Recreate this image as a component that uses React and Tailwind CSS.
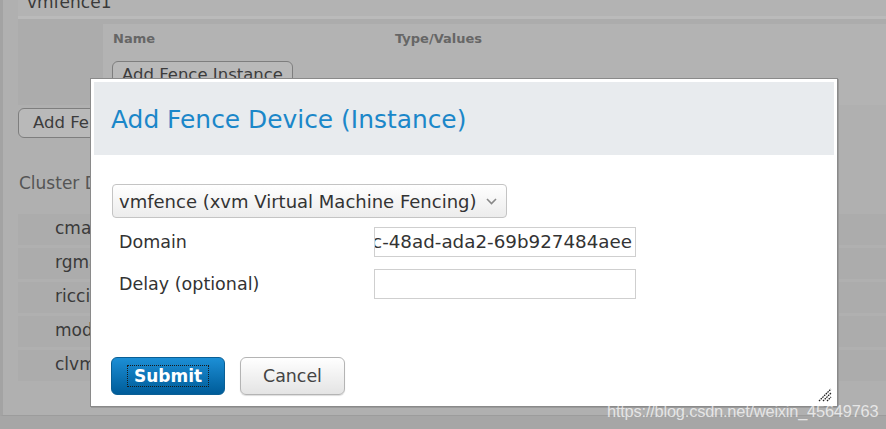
import React from 'react';

const daemons = ['cman', 'rgmanager', 'ricci', 'modclusterd', 'clvmd'];

const ResizeGrip = () => (
  <svg width="16" height="16" viewBox="0 0 16 16" className="absolute right-[4px] bottom-[3px]">
    <path d="M2 14 L14 2 M6 14 L14 6 M10 14 L14 10" stroke="#222" strokeWidth="1.3" strokeDasharray="1.6 0.8" fill="none" />
  </svg>
);

const Dialog = () => (
  <div className="absolute left-[90px] top-[78px] w-[748px] h-[329px] border border-[#8a8a8a] bg-white p-[3px] shadow-[1px_1px_0_#9a9a9a]">
    <div className="h-[73px] bg-[#e8ebee] flex items-center pl-[17px] pt-[3px]">
      <h2 className="text-[24.9px] text-[#1b87c9] leading-none">Add Fence Device (Instance)</h2>
    </div>

    <div className="pl-[18px] pt-[29px]">
      <div className="w-[395px] h-[34px] rounded-[4px] border border-[#c4c4c4] bg-gradient-to-b from-white to-[#ececec] flex items-center justify-between pl-[6px] pr-[9px] text-[18px] text-[#333]">
        <span>vmfence (xvm Virtual Machine Fencing)</span>
        <svg width="11" height="7" viewBox="0 0 11 7">
          <path d="M1 1 L5.5 5.5 L10 1" stroke="#888" strokeWidth="1.6" fill="none" />
        </svg>
      </div>

      <div className="mt-[9px] flex items-center text-[17.5px] text-[#333]">
        <span className="w-[262px] pl-[7px]">Domain</span>
        <div className="w-[262px] h-[30px] border border-[#cfcfcf] flex items-center justify-end overflow-hidden pr-[3px] whitespace-nowrap text-[18.3px]">
          <span>3a1f6d2c-48ad-ada2-69b927484aee</span>
        </div>
      </div>

      <div className="mt-[12px] flex items-center text-[17.5px] text-[#333]">
        <span className="w-[262px] pl-[7px]">Delay (optional)</span>
        <div className="w-[262px] h-[30px] border border-[#cfcfcf]" />
      </div>

      <div className="mt-[58px] -ml-[1px] flex gap-[15px]">
        <button className="w-[114px] h-[38px] rounded-[6px] border border-[#0a5f95] bg-gradient-to-b from-[#1c8fd6] to-[#005c99] flex items-center justify-center">
          <span className="border border-dotted border-[#1a1a1a] px-[6px] text-[17px] font-bold text-white leading-[20px]">Submit</span>
        </button>
        <button className="w-[105px] h-[38px] rounded-[6px] border border-[#b4b4b4] bg-gradient-to-b from-white to-[#e4e4e4] text-[17.4px] text-[#444] shadow-[0_1px_1px_#ddd]">
          Cancel
        </button>
      </div>
    </div>
    <ResizeGrip />
  </div>
);

export default function App() {
  return (
    <div className="relative w-[886px] h-[429px] overflow-hidden bg-[#a6a6a6]" style={{ fontFamily: '"DejaVu Sans", sans-serif' }}>
      {/* page behind the overlay */}
      <div className="h-[416px] bg-[#b0b0b0] border-l-[3px] border-[#a3a3a3] border-b border-b-[#9c9c9c] pl-[15px]">
        <div className="h-[16px] bg-[#b3b3b3] overflow-hidden">
          <div className="-mt-[10px] ml-[9px] text-[17px] text-[#3a3a3a]">vmfence1</div>
        </div>
        <div className="h-[3px] bg-[#bababa]" />
        <div className="h-[86px] bg-[#acacac] flex">
          <div className="w-[85px]" />
          <div className="flex-1 bg-[#b3b3b3] mt-[5px] pl-[10px]">
            <div className="flex pt-[5px] text-[13px] font-bold text-[#666]">
              <span className="w-[282px]">Name</span>
              <span>Type/Values</span>
            </div>
            <button className="mt-[12px] -ml-[1px] h-[30px] w-[181px] rounded-[6px] border border-[#7e7e7e] bg-[#b9b9b9] text-[16.5px] text-[#3c3c3c]">
              Add Fence Instance
            </button>
          </div>
        </div>
        <button className="mt-[3px] h-[30px] w-[170px] text-left pl-[14px] rounded-[6px] border border-[#7e7e7e] bg-[#b9b9b9] text-[16.5px] text-[#3c3c3c]">
          Add Fence Device
        </button>
        <div className="mt-[33px] pl-[1px] text-[17px] text-[#555]">Cluster Daemons</div>
        <div className="mt-[17px] flex flex-col gap-[3px]">
          {daemons.map((d) => (
            <div key={d} className="h-[31px] bg-[#acacac] flex items-center pl-[37px] text-[17px] text-[#3a3a3a]">
              {d}
            </div>
          ))}
        </div>
      </div>

      <Dialog />

      <div className="absolute left-[607px] top-[399px] text-[16.4px] text-white/70 tracking-[-0.2px]" style={{ fontFamily: '"Liberation Sans", Arial, sans-serif' }}>
        https://blog.csdn.net/weixin_45649763
      </div>
    </div>
  );
}
